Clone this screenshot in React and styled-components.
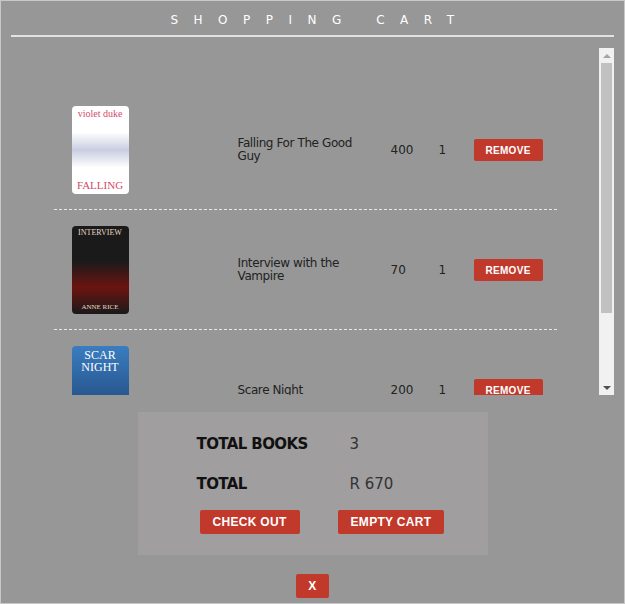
import React from "react";
import styled, { createGlobalStyle } from "styled-components";

const Global = createGlobalStyle`
  html, body { margin: 0; padding: 0; background: #979797; }
  * { box-sizing: border-box; }
`;

const Frame = styled.div`
  width: 625px; height: 604px; border: 1px solid #c8c8c8; background: #979797;
  padding: 0 10px; display: flex; flex-direction: column; align-items: center;
  font-family: "Liberation Sans", Arial, sans-serif;
`;
const Title = styled.h1`
  margin: 0; width: 100%; text-align: center; color: #fff; font-weight: 400;
  font-size: 12px; letter-spacing: 15.5px; padding: 12px 0 8px 15px;
  border-bottom: 2px solid #e2e2e2; font-family: "DejaVu Sans", sans-serif;
`;
const ListWrap = styled.div`
  margin-top: 11px; width: 100%; height: 347px; display: flex;
`;
const List = styled.div`
  flex: 1; height: 100%; overflow: hidden;
  padding-top: 42px; display: flex; flex-direction: column; align-items: center;
`;
const Track = styled.div`
  width: 15px; height: 100%; background: #f1f1f1; display: flex; flex-direction: column;
  align-items: center; padding: 0 2px;
`;
const Arrow = styled.div`
  flex: none; height: 15px; width: 100%; display: flex; align-items: center; justify-content: center;
  &::after { content: ""; border-left: 4px solid transparent; border-right: 4px solid transparent;
    ${p => p.$down ? "border-top: 4px solid #505050;" : "border-bottom: 4px solid #a3a3a3;"} }
`;
const Thumb = styled.div` width: 100%; height: 250px; background: #c1c1c1; `;
const Spacer = styled.div` flex: 1; `;
const Row = styled.div`
  flex: none; width: 503px; display: grid; grid-template-columns: 166px 153px 48px 35px 1fr;
  align-items: center; padding: 16px 0 15px 18px; border-bottom: 1px dashed #e8e8e8;
  font-family: "DejaVu Sans", sans-serif; font-size: 12px; color: #222;
  &:last-child { border-bottom: none; }
`;
const Cover = styled.div`
  width: 57px; height: 88px; border-radius: 4px; overflow: hidden;
  background: ${p => p.$bg}; display: flex; flex-direction: column; align-items: center;
  justify-content: space-between; padding: 3px 2px; font-family: "Liberation Serif", serif;
`;
const CoverText = styled.span`
  color: ${p => p.$c}; font-size: ${p => p.$s}px; line-height: 1; text-align: center;
`;
const Name = styled.div` width: 130px; line-height: 13px; letter-spacing: -0.4px; `;
const Btn = styled.button`
  background: #c0392b; color: #fff; border: none; border-radius: 2px; font-weight: 700;
  font-family: "Liberation Sans", Arial, sans-serif; font-size: ${p => p.$s || 10}px;
  height: ${p => p.$h || 22}px; padding: 0 ${p => p.$px || 12}px; letter-spacing: 0.3px;
  justify-self: start; cursor: pointer;
`;
const Summary = styled.div`
  margin-top: 17px; width: 350px; height: 143px; background: #a09e9f;
  padding: 22px 0 0 59px; display: grid; grid-template-columns: 153px 1fr; row-gap: 20px;
  align-content: start; align-items: center;
`;
const Label = styled.div` font-weight: 700; font-size: 15px; line-height: 20px; color: #111; font-family: "DejaVu Sans", sans-serif; letter-spacing: -0.6px; `;
const Value = styled.div` font-size: 15px; line-height: 20px; color: #333; font-family: "DejaVu Sans", sans-serif; `;
const Actions = styled.div` grid-column: 1 / 3; display: flex; gap: 38px; margin: -4px 0 0 3px; `;
const Close = styled(Btn)` margin-top: 19px; justify-self: auto; `;

const books = [
  { title: "Falling For The Good Guy", price: 400, bg: "linear-gradient(#fff 30%, #c9cde0 50%, #fff 70%)",
    top: ["violet duke", "#d24a6a", 10], bottom: ["FALLING", "#d24a6a", 11] },
  { title: "Interview with the Vampire", price: 70, bg: "linear-gradient(#1a1a1a 40%, #6b1410 70%, #1a1a1a)",
    top: ["INTERVIEW", "#e6d7c4", 8], bottom: ["ANNE RICE", "#e6d7c4", 7] },
  { title: "Scare Night", price: 200, bg: "linear-gradient(#3a7dc0, #1a3a6a)",
    top: ["SCAR NIGHT", "#fff", 12], bottom: ["", "#fff", 8] },
];

export default function App() {
  return (
    <Frame>
      <Global />
      <Title>SHOPPING CART</Title>
      <ListWrap>
        <List>
          {books.map(b => (
            <Row key={b.title}>
              <Cover $bg={b.bg}>
                <CoverText $c={b.top[1]} $s={b.top[2]}>{b.top[0]}</CoverText>
                <CoverText $c={b.bottom[1]} $s={b.bottom[2]}>{b.bottom[0]}</CoverText>
              </Cover>
              <Name>{b.title}</Name>
              <div>{b.price}</div>
              <div>1</div>
              <Btn>REMOVE</Btn>
            </Row>
          ))}
        </List>
        <Track>
          <Arrow />
          <Thumb />
          <Spacer />
          <Arrow $down />
        </Track>
      </ListWrap>
      <Summary>
        <Label>TOTAL BOOKS</Label><Value>3</Value>
        <Label>TOTAL</Label><Value>R 670</Value>
        <Actions>
          <Btn $h={24} $s={12} $px={13}>CHECK OUT</Btn>
          <Btn $h={24} $s={12} $px={13}>EMPTY CART</Btn>
        </Actions>
      </Summary>
      <Close $h={24} $s={12}>X</Close>
    </Frame>
  );
}
